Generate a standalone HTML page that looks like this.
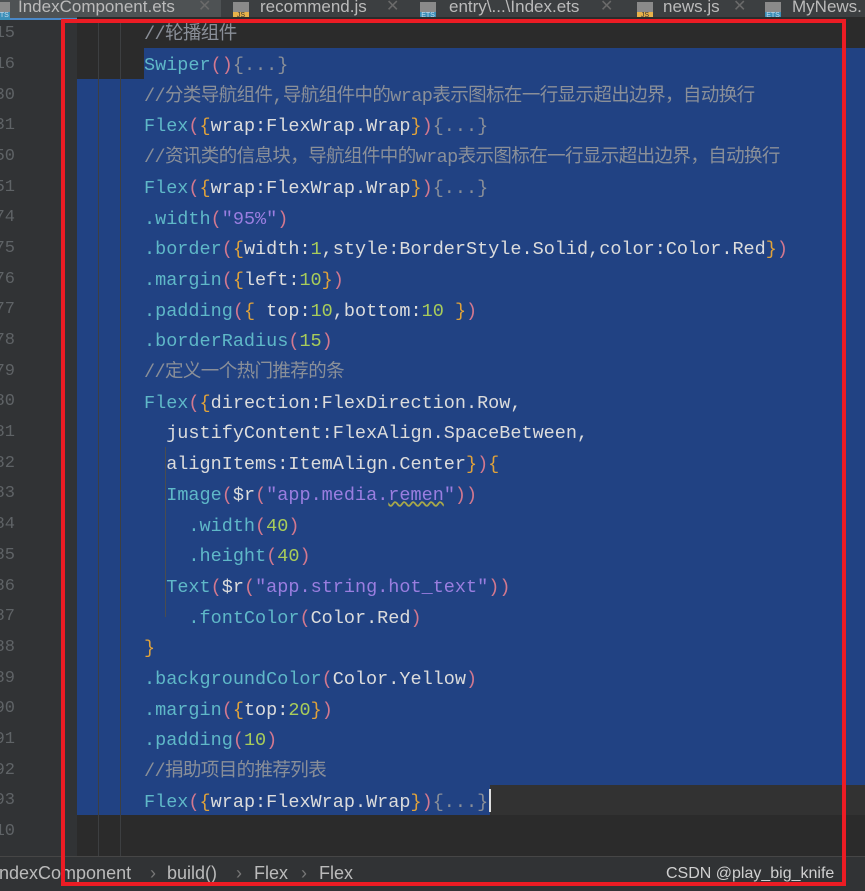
<!DOCTYPE html>
<html><head><meta charset="utf-8"><style>
*{margin:0;padding:0;box-sizing:border-box}
body{width:865px;height:891px;overflow:hidden;background:#2b2b2b;position:relative;font-family:"Liberation Mono","Noto Sans CJK SC",monospace}
.tabs{position:absolute;left:0;top:0;width:865px;height:20px;background:#3c3f41;font-family:"Liberation Sans","Noto Sans CJK SC",sans-serif;font-size:17px;color:#bbbbbb;line-height:17px}
.tab{position:absolute;top:-2px;white-space:nowrap}
.x{position:absolute;top:-2px;color:#6a6a6a;font-size:16px}
.ic{position:absolute;top:2px;width:16px;height:18px;background:#8a8a8a}
.ic i{position:absolute;left:0;bottom:0;width:16px;height:8px;font-size:7px;font-style:normal;line-height:8px;text-align:center;font-family:"Liberation Sans",sans-serif}
.js i{background:#e8b24a;color:#333}
.ets i{background:#3b8fb8;color:#cde}
.gut{position:absolute;left:0;top:20px;width:77px;height:837px;background:#313335}
.ln{position:absolute;left:-8px;width:23px;text-align:right;font-size:17px;color:#5f6366;font-family:"Liberation Mono",monospace;margin-top:2px}
.line{position:absolute;left:144px;height:30.7px;line-height:30.7px;padding-top:3px;font-size:18.5px;white-space:pre;color:#dcdcdc}
.sel{position:absolute;background:#214283}
.c{color:#8a8f98;letter-spacing:-0.6px}.f{color:#5fb8c8}.p{color:#d2788f}.b{color:#e0a23a}.n{color:#a8cc5a}.s{color:#9a7ee0}.d{color:#8a8f98}
.crumb{position:absolute;left:0;top:856px;width:865px;height:35px;background:#313335;border-top:1px solid #464646;font-family:"Liberation Sans",sans-serif;font-size:18px;color:#bbbbbb;line-height:33px}
.crumb span{position:absolute;top:0}
.red{position:absolute;left:61px;top:19px;width:785px;height:867px;border:4px solid #ec1c24}
.guide{position:absolute;width:1px;background:#3d3f41}
</style></head><body>
<div class="tabs">
<div style="position:absolute;left:0;top:0;width:221px;height:20px;background:#4e5254"></div>
<div style="position:absolute;left:0;top:18px;width:221px;height:3px;background:#4a88c7"></div>
<div class="ic ets" style="left:-6px"><i>ETS</i></div>
<span class="tab" style="left:18px">IndexComponent.ets</span><span class="x" style="left:198px">✕</span>
<div class="ic js" style="left:233px"><i>JS</i></div>
<span class="tab" style="left:260px">recommend.js</span><span class="x" style="left:386px">✕</span>
<div class="ic ets" style="left:420px"><i>ETS</i></div>
<span class="tab" style="left:449px">entry\...\Index.ets</span><span class="x" style="left:600px">✕</span>
<div class="ic js" style="left:637px"><i>JS</i></div>
<span class="tab" style="left:663px">news.js</span><span class="x" style="left:733px">✕</span>
<div class="ic ets" style="left:765px"><i>ETS</i></div>
<span class="tab" style="left:792px">MyNews.</span>
</div>
<div class="gut"></div>
<div class="sel" style="left:144px;top:48px;width:721px;height:30.7px"></div>
<div class="sel" style="left:77px;top:78.7px;width:788px;height:706.1px"></div>
<div class="sel" style="left:77px;top:784.8px;width:413px;height:30.7px"></div>
<div style="position:absolute;left:490px;top:784.8px;width:375px;height:30.7px;background:#323232"></div>
<div style="position:absolute;left:77px;top:17.3px;width:788px;height:30.7px;background:#2b2b2b"></div>
<div style="position:absolute;left:77px;top:48px;width:67px;height:30.7px;background:#2b2b2b"></div>
<div class="guide" style="left:98px;top:20px;height:836px"></div>
<div class="guide" style="left:120px;top:20px;height:836px"></div>
<div class="guide" style="left:165px;top:447px;height:170px;background:#4a4d50"></div>
<div class="ln" style="top:22px">15</div><div class="ln" style="top:53px">16</div><div class="ln" style="top:84px">30</div><div class="ln" style="top:114px">31</div><div class="ln" style="top:145px">50</div><div class="ln" style="top:176px">51</div><div class="ln" style="top:206px">74</div><div class="ln" style="top:237px">75</div><div class="ln" style="top:268px">76</div><div class="ln" style="top:298px">77</div><div class="ln" style="top:329px">78</div><div class="ln" style="top:360px">79</div><div class="ln" style="top:390px">80</div><div class="ln" style="top:421px">81</div><div class="ln" style="top:452px">82</div><div class="ln" style="top:482px">83</div><div class="ln" style="top:513px">84</div><div class="ln" style="top:544px">85</div><div class="ln" style="top:575px">86</div><div class="ln" style="top:605px">87</div><div class="ln" style="top:636px">88</div><div class="ln" style="top:667px">89</div><div class="ln" style="top:697px">90</div><div class="ln" style="top:728px">91</div><div class="ln" style="top:759px">92</div><div class="ln" style="top:789px">93</div><div class="ln" style="top:820px">10</div>
<div class="line c" style="top:17.3px">//轮播组件</div>
<div class="line" style="top:48px"><span class="f">Swiper</span><span class="p">()</span><span class="d">{...}</span></div>
<div class="line c" style="top:78.7px">//分类导航组件,导航组件中的wrap表示图标在一行显示超出边界，自动换行</div>
<div class="line" style="top:109.4px"><span class="f">Flex</span><span class="p">(</span><span class="b">{</span>wrap:FlexWrap.Wrap<span class="b">}</span><span class="p">)</span><span class="d">{...}</span></div>
<div class="line c" style="top:140.1px">//资讯类的信息块，导航组件中的wrap表示图标在一行显示超出边界，自动换行</div>
<div class="line" style="top:170.8px"><span class="f">Flex</span><span class="p">(</span><span class="b">{</span>wrap:FlexWrap.Wrap<span class="b">}</span><span class="p">)</span><span class="d">{...}</span></div>
<div class="line" style="top:201.5px"><span class="f">.width</span><span class="p">(</span><span class="s">"95%"</span><span class="p">)</span></div>
<div class="line" style="top:232.2px"><span class="f">.border</span><span class="p">(</span><span class="b">{</span>width:<span class="n">1</span>,style:BorderStyle.Solid,color:Color.Red<span class="b">}</span><span class="p">)</span></div>
<div class="line" style="top:262.9px"><span class="f">.margin</span><span class="p">(</span><span class="b">{</span>left:<span class="n">10</span><span class="b">}</span><span class="p">)</span></div>
<div class="line" style="top:293.6px"><span class="f">.padding</span><span class="p">(</span><span class="b">{</span> top:<span class="n">10</span>,bottom:<span class="n">10</span> <span class="b">}</span><span class="p">)</span></div>
<div class="line" style="top:324.3px"><span class="f">.borderRadius</span><span class="p">(</span><span class="n">15</span><span class="p">)</span></div>
<div class="line c" style="top:355px">//定义一个热门推荐的条</div>
<div class="line" style="top:385.7px"><span class="f">Flex</span><span class="p">(</span><span class="b">{</span>direction:FlexDirection.Row,</div>
<div class="line" style="top:416.4px">  justifyContent:FlexAlign.SpaceBetween,</div>
<div class="line" style="top:447.1px">  alignItems:ItemAlign.Center<span class="b">}</span><span class="p">)</span><span class="b">{</span></div>
<div class="line" style="top:477.8px">  <span class="f">Image</span><span class="p">(</span>$r<span class="p">(</span><span class="s">"app.media.<u style="text-decoration-color:#a8a84a;text-decoration-style:wavy">remen</u>"</span><span class="p">))</span></div>
<div class="line" style="top:508.5px">    <span class="f">.width</span><span class="p">(</span><span class="n">40</span><span class="p">)</span></div>
<div class="line" style="top:539.2px">    <span class="f">.height</span><span class="p">(</span><span class="n">40</span><span class="p">)</span></div>
<div class="line" style="top:569.9px">  <span class="f">Text</span><span class="p">(</span>$r<span class="p">(</span><span class="s">"app.string.hot_text"</span><span class="p">))</span></div>
<div class="line" style="top:600.6px">    <span class="f">.fontColor</span><span class="p">(</span>Color.Red<span class="p">)</span></div>
<div class="line" style="top:631.3px"><span class="b">}</span></div>
<div class="line" style="top:662px"><span class="f">.backgroundColor</span><span class="p">(</span>Color.Yellow<span class="p">)</span></div>
<div class="line" style="top:692.7px"><span class="f">.margin</span><span class="p">(</span><span class="b">{</span>top:<span class="n">20</span><span class="b">}</span><span class="p">)</span></div>
<div class="line" style="top:723.4px"><span class="f">.padding</span><span class="p">(</span><span class="n">10</span><span class="p">)</span></div>
<div class="line c" style="top:754.1px">//捐助项目的推荐列表</div>
<div class="line" style="top:784.8px"><span class="f">Flex</span><span class="p">(</span><span class="b">{</span>wrap:FlexWrap.Wrap<span class="b">}</span><span class="p">)</span><span class="d">{...}</span></div>
<div style="position:absolute;left:489px;top:789px;width:2px;height:23px;background:#ddd"></div>
<div class="crumb">
<span style="left:-6px">IndexComponent</span><span style="left:150px;color:#777">›</span><span style="left:167px">build()</span><span style="left:236px;color:#777">›</span><span style="left:254px">Flex</span><span style="left:301px;color:#777">›</span><span style="left:319px">Flex</span>
<span style="left:666px;color:#d0d0d0;font-size:16px">CSDN @play_big_knife</span>
</div>
<div class="red"></div>
</body></html>
